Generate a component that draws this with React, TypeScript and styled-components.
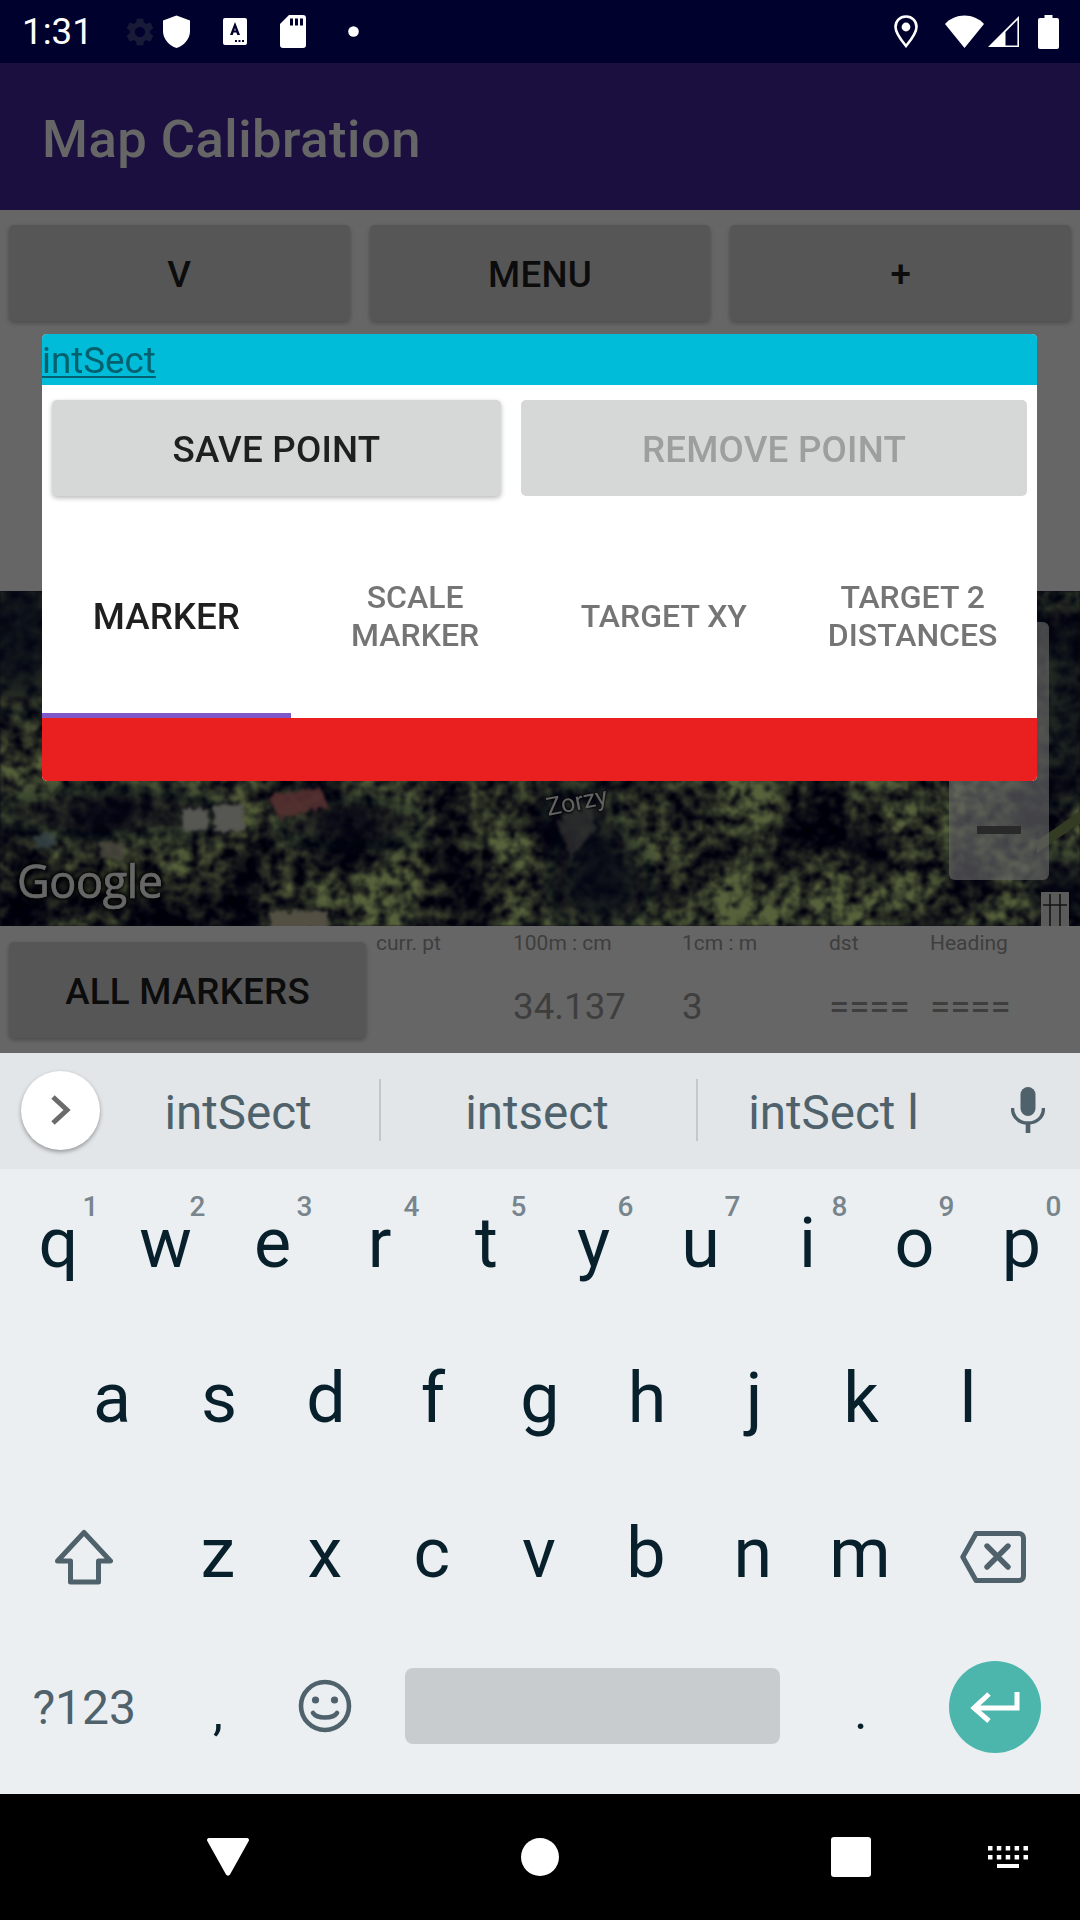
import React from "react";
import styled, { createGlobalStyle } from "styled-components";

const Global = createGlobalStyle`
  html, body { margin: 0; padding: 0; background: #000; }
  * { box-sizing: border-box; }
  body { font-family: Roboto, "Liberation Sans", sans-serif; }
`;

const Page = styled.div`
  width: 1080px;
  height: 1920px;
  display: flex;
  flex-direction: column;
  overflow: hidden;
`;

const StatusBar = styled.div`
  height: 63px;
  flex: none;
  background: #01012e;
  display: flex;
  align-items: center;
  padding: 0 21px 0 22px;
  color: #fff;
`;
const Clock = styled.span`
  font-size: 36.75px;
  width: 67px;
  line-height: 63px;
`;
const StatusIcon = styled.svg<{ $ml: number }>`
  flex: none;
  display: block;
  margin-left: ${(p) => p.$ml}px;
`;
const StatusSpacer = styled.div`
  flex: 1;
`;

const Main = styled.div`
  position: relative;
  height: 990px;
  flex: none;
  background: #fff;
  display: flex;
  flex-direction: column;
`;
const AppBar = styled.header`
  height: 147px;
  flex: none;
  background: #4527a0;
  color: #fff;
  display: flex;
  align-items: center;
  padding: 5px 0 0 42px;
  font-size: 52.5px;
  font-weight: 500;
  letter-spacing: 0.5px;
`;
const Toolbar = styled.div`
  height: 381px;
  flex: none;
  padding: 15px 9px 0 9px;
  display: flex;
  gap: 20px;
  align-items: flex-start;
`;
const RaisedButton = styled.div<{ $muted?: boolean; $flat?: boolean }>`
  height: 96px;
  padding-top: 2px;
  border-radius: 5px;
  background: #d6d7d7;
  color: ${(p) => (p.$muted ? "#9e9e9e" : "#1f1f1f")};
  display: flex;
  align-items: center;
  justify-content: center;
  font-size: 36.75px;
  font-weight: 500;
  letter-spacing: 0.2px;
  box-shadow: ${(p) => (p.$flat ? "none" : "0 2px 5px rgba(0,0,0,.28)")};
`;
const ToolButton = styled(RaisedButton)`
  flex: 1;
`;

const MapArea = styled.div`
  position: relative;
  height: 335px;
  flex: none;
  overflow: hidden;
  background: #16203c;
`;
const MapImage = styled.svg`
  display: block;
  width: 1080px;
  height: 335px;
`;
const GoogleMark = styled.span`
  position: absolute;
  left: 17px;
  top: 260px;
  font-family: "Open Sans", Roboto, sans-serif;
  font-size: 45px;
  font-weight: 400;
  letter-spacing: -0.4px;
  line-height: 60px;
  color: #fff;
  -webkit-text-stroke: 0.7px #fff;
  text-shadow: 0 0 3px #000, 0 0 4px #000, 0 0 5px #000, 0 0 6px #000;
`;
const PlaceName = styled.span`
  position: absolute;
  left: 546px;
  top: 196px;
  font-size: 25px;
  line-height: 30px;
  color: #f2f2f2;
  transform: rotate(-11deg);
  text-shadow: 0 0 2px #000, 0 0 3px #000;
`;
const ZoomControl = styled.div`
  position: absolute;
  left: 949px;
  top: 31px;
  width: 100px;
  height: 258px;
  border-radius: 6px;
  background: rgba(255, 255, 255, 0.66);
  display: flex;
  align-items: flex-end;
  justify-content: center;
  padding-bottom: 46px;
`;
const ZoomMinus = styled.div`
  width: 44px;
  height: 8px;
  background: #666;
`;

const BottomRow = styled.div`
  height: 127px;
  flex: none;
  padding: 16px 0 0 9px;
  display: flex;
  align-items: flex-start;
`;
const AllMarkers = styled(RaisedButton)`
  width: 357px;
  flex: none;
`;
const Stats = styled.div`
  margin-left: 10px;
  flex: 1;
  display: grid;
  grid-template-columns: 137px 169px 147px 101px 1fr;
  grid-template-rows: 30px 56px;
  row-gap: 21px;
  margin-top: -16px;
  padding-top: 2px;
  color: #9c9c9c;
`;
const StatLabel = styled.div`
  font-size: 21px;
  line-height: 30px;
`;
const StatValue = styled.div`
  font-size: 36.75px;
  line-height: 56px;
`;

const Scrim = styled.div`
  position: absolute;
  inset: 0;
  background: rgba(0, 0, 0, 0.6);
`;

const Dialog = styled.div`
  position: absolute;
  left: 42px;
  top: 271px;
  width: 995px;
  height: 447px;
  border-radius: 5px;
  background: #fff;
  overflow: hidden;
  display: flex;
  flex-direction: column;
`;
const DialogTitle = styled.div`
  height: 51px;
  flex: none;
  background: #00bcd8;
  font-size: 36.75px;
  line-height: 54px;
  color: #03606f;
  text-decoration: underline;
  text-underline-offset: 3px;
  text-decoration-thickness: 2px;
`;
const DialogActions = styled.div`
  flex: none;
  padding: 15px 10px 0 10px;
  display: flex;
  gap: 20px;
`;
const SaveButton = styled(RaisedButton)`
  width: 449px;
  flex: none;
`;
const RemoveButton = styled(RaisedButton)`
  flex: 1;
`;
const Tabs = styled.div`
  margin-top: 22px;
  height: 200px;
  flex: none;
  display: grid;
  grid-template-columns: repeat(4, 1fr);
`;
const Tab = styled.div<{ $active?: boolean }>`
  display: flex;
  align-items: center;
  justify-content: center;
  text-align: center;
  font-weight: 500;
  line-height: 38px;
  padding-top: ${(p) => (p.$active ? 2 : 0)}px;
  font-size: ${(p) => (p.$active ? 36.75 : 32)}px;
  color: ${(p) => (p.$active ? "#1f1f1f" : "#757575")};
  border-bottom: 5px solid ${(p) => (p.$active ? "#7e57c8" : "transparent")};
`;
const RedBand = styled.div`
  flex: 1;
  background: #ea2020;
`;

const Keyboard = styled.div`
  height: 741px;
  flex: none;
  background: #eceff2;
  display: flex;
  flex-direction: column;
`;
const Suggestions = styled.div`
  height: 116px;
  flex: none;
  background: #e2e6e9;
  display: flex;
  align-items: center;
  padding-left: 21px;
  padding-bottom: 2px;
`;
const ExpandButton = styled.div`
  width: 79px;
  height: 79px;
  flex: none;
  border-radius: 50%;
  background: #fff;
  box-shadow: 0 2px 4px rgba(0, 0, 0, 0.35);
  display: flex;
  align-items: center;
  justify-content: center;
`;
const Suggestion = styled.div<{ $w: number }>`
  width: ${(p) => p.$w}px;
  flex: none;
  text-align: center;
  font-size: 47.5px;
  line-height: 62px;
  padding: 5px 3px 0 0;
  color: #4f626c;
`;
const SuggestDivider = styled.div`
  width: 2px;
  height: 62px;
  flex: none;
  background: #c3c8cb;
`;
const MicIcon = styled.svg`
  flex: none;
  display: block;
  margin-left: 39px;
`;
const KeyRow = styled.div<{ $center?: boolean }>`
  height: 155px;
  flex: none;
  display: flex;
  padding: 0 4px;
  justify-content: ${(p) => (p.$center ? "center" : "flex-start")};
`;
const Key = styled.div<{ $small?: boolean; $lift?: number }>`
  position: relative;
  width: 107px;
  flex: none;
  display: flex;
  align-items: center;
  justify-content: center;
  font-size: ${(p) => (p.$small ? 50 : 70)}px;
  line-height: 84px;
  color: #07202b;
  padding-bottom: ${(p) => p.$lift ?? (p.$small ? 0 : 8)}px;
`;
const Digit = styled.span`
  position: absolute;
  left: 74.5px;
  top: 21px;
  width: 22px;
  text-align: center;
  font-size: 28px;
  font-weight: 500;
  line-height: 34px;
  color: #78858c;
`;
const WideKey = styled.div<{ $lift?: number }>`
  width: 160.4px;
  flex: none;
  display: flex;
  align-items: center;
  justify-content: center;
  color: #4f626c;
  font-size: 48px;
  padding-bottom: ${(p) => p.$lift ?? 0}px;
`;
const BackspaceIcon = styled.svg`
  display: block;
  margin-right: 1px;
`;
const SpaceCell = styled.div`
  width: 429px;
  flex: none;
  padding: 0 27px;
  display: flex;
  align-items: center;
`;
const SpaceBar = styled.div`
  width: 100%;
  height: 76px;
  border-radius: 8px;
  background: #c8cccf;
  margin-top: -12px;
`;
const EnterButton = styled.div`
  width: 92px;
  height: 92px;
  border-radius: 50%;
  background: #4db6ac;
  display: flex;
  align-items: center;
  justify-content: center;
  margin-top: -9px;
`;

const NavBar = styled.div`
  height: 126px;
  flex: none;
  background: #000;
  position: relative;
  display: flex;
  align-items: center;
  padding-bottom: 1px;
`;
const NavSvg = styled.svg<{ $ml: number }>`
  flex: none;
  display: block;
  margin-left: ${(p) => p.$ml}px;
`;

const Foliage = () => (
  <MapImage viewBox="0 0 1080 335" preserveAspectRatio="none">
    <defs>
      <filter id="foliage" x="0" y="0" width="100%" height="100%" colorInterpolationFilters="sRGB">
        <feTurbulence type="fractalNoise" baseFrequency="0.085" numOctaves="4" seed="11" result="hiRaw" />
        <feColorMatrix in="hiRaw" type="matrix" values="1 0 0 0 0  1 0 0 0 0  1 0 0 0 0  0 0 0 0 1" result="hi" />
        <feTurbulence type="fractalNoise" baseFrequency="0.014" numOctaves="2" seed="23" result="loRaw" />
        <feColorMatrix in="loRaw" type="matrix" values="1 0 0 0 0  1 0 0 0 0  1 0 0 0 0  0 0 0 0 1" result="lo" />
        <feComposite in="hi" in2="lo" operator="arithmetic" k1="2.2" k2="0" k3="0" k4="0" result="mix" />
        <feColorMatrix
          in="mix"
          type="matrix"
          values="1.15 0 0 0 -0.3  1.3 0 0 0 -0.34  0.6 0 0 0 -0.02  0 0 0 0 1"
        />
        <feGaussianBlur stdDeviation="0.8" />
      </filter>
      <filter id="soft" x="-30%" y="-30%" width="160%" height="160%">
        <feGaussianBlur stdDeviation="16" />
      </filter>
      <filter id="rough" x="-20%" y="-20%" width="140%" height="140%">
        <feTurbulence type="fractalNoise" baseFrequency="0.14" numOctaves="2" seed="4" result="n" />
        <feDisplacementMap in="SourceGraphic" in2="n" scale="10" />
        <feGaussianBlur stdDeviation="1.4" />
      </filter>
    </defs>
    <rect width="1080" height="335" filter="url(#foliage)" />
    <g fill="#0e1734" opacity="0.8" filter="url(#soft)">
      <ellipse cx="20" cy="50" rx="50" ry="70" />
      <ellipse cx="110" cy="222" rx="120" ry="18" />
      <ellipse cx="350" cy="232" rx="80" ry="18" />
      <ellipse cx="600" cy="290" rx="46" ry="50" />
      <ellipse cx="580" cy="222" rx="36" ry="22" />
      <ellipse cx="1062" cy="110" rx="26" ry="110" />
      <ellipse cx="1062" cy="290" rx="30" ry="24" />
    </g>
    <g filter="url(#rough)">
      <path d="M268 206 L320 196 L328 216 L280 228 Z" fill="#e07c7c" opacity="0.85" />
      <rect x="183" y="218" width="26" height="22" fill="#d8d8cc" />
      <rect x="214" y="214" width="30" height="26" fill="#d8d8cc" />
      <rect x="35" y="243" width="20" height="13" fill="#8fb0bb" opacity="0.8" />
      <rect x="100" y="252" width="24" height="16" fill="#bdb39e" opacity="0.8" />
      <rect x="270" y="320" width="58" height="18" fill="#cfc6a8" />
      <path d="M558 230 L590 212 L596 236 L570 270 Z" fill="#a0a094" opacity="0.55" />
    </g>
    <rect x="1041" y="301" width="28" height="34" fill="#e4e4e4" />
    <path d="M1050 303 V335 M1060 303 V335 M1043 314 H1067" stroke="#333" strokeWidth="1.6" />
    <path d="M1037 262 L1080 232 L1080 220 L1037 250 Z" fill="#7f9558" />
  </MapImage>
);

const rowOne: [string, string][] = [
  ["q", "1"], ["w", "2"], ["e", "3"], ["r", "4"], ["t", "5"],
  ["y", "6"], ["u", "7"], ["i", "8"], ["o", "9"], ["p", "0"],
];

export default function App() {
  return (
    <Page>
      <Global />
      <StatusBar>
        <Clock>1:31</Clock>
        <StatusIcon $ml={34} width="34" height="34" viewBox="0 0 24 24" fill="#191938">
          <path d="M19.14 12.94c.04-.3.06-.61.06-.94 0-.32-.02-.64-.07-.94l2.03-1.58c.18-.14.23-.41.12-.61l-1.92-3.32c-.12-.22-.37-.29-.59-.22l-2.39.96c-.5-.38-1.03-.7-1.62-.94l-.36-2.54c-.04-.24-.24-.41-.48-.41h-3.84c-.24 0-.43.17-.47.41l-.36 2.54c-.59.24-1.13.57-1.62.94l-2.39-.96c-.22-.08-.47 0-.59.22L2.74 8.87c-.12.21-.08.47.12.61l2.03 1.58c-.05.3-.09.63-.09.94s.02.64.07.94l-2.03 1.58c-.18.14-.23.41-.12.61l1.92 3.32c.12.22.37.29.59.22l2.39-.96c.5.38 1.03.7 1.62.94l.36 2.54c.05.24.24.41.48.41h3.84c.24 0 .44-.17.47-.41l.36-2.54c.59-.24 1.13-.56 1.62-.94l2.39.96c.22.08.47 0 .59-.22l1.92-3.32c.12-.22.07-.47-.12-.61l-2.01-1.58zM12 15.6c-1.98 0-3.6-1.62-3.6-3.6s1.62-3.6 3.6-3.6 3.6 1.62 3.6 3.6-1.62 3.6-3.6 3.6z" />
        </StatusIcon>
        <StatusIcon $ml={6} width="27" height="33" viewBox="0 0 27 33" fill="#fff">
          <path d="M13.5 0.5 L27 5.5 V16 C27 24 21 30.5 13.5 33 C6 30.5 0 24 0 16 V5.5 Z" />
        </StatusIcon>
        <StatusIcon $ml={33} width="24" height="27" viewBox="0 0 24 27">
          <rect width="24" height="27" rx="2" fill="#fff" />
          <path d="M12 4 L17 17 H14.3 L13.4 14.5 H10.6 L9.7 17 H7 Z M11.3 12.4 H12.7 L12 10 Z" fill="#01012e" />
          <rect x="12" y="22" width="2" height="2" fill="#01012e" />
          <rect x="15.5" y="22" width="2" height="2" fill="#01012e" />
          <rect x="19" y="22" width="2" height="2" fill="#01012e" />
        </StatusIcon>
        <StatusIcon $ml={33} width="26" height="33" viewBox="0 0 26 33">
          <path d="M9 0 H23 a3 3 0 0 1 3 3 V30 a3 3 0 0 1 -3 3 H3 a3 3 0 0 1 -3 -3 V9 Z" fill="#fff" />
          <rect x="10" y="3.5" width="3" height="7" fill="#01012e" />
          <rect x="15" y="3.5" width="3" height="7" fill="#01012e" />
          <rect x="20" y="3.5" width="3" height="7" fill="#01012e" />
        </StatusIcon>
        <StatusIcon $ml={42} width="11" height="11" viewBox="0 0 11 11">
          <circle cx="5.5" cy="5.5" r="5.3" fill="#fff" />
        </StatusIcon>
        <StatusSpacer />
        <StatusIcon width="24" height="33" viewBox="0 0 24 33" $ml={0}>
          <path d="M12 1.5 C5.6 1.5 1.5 6.2 1.5 12 C1.5 18.5 8 26 12 31 C16 26 22.5 18.5 22.5 12 C22.5 6.2 18.4 1.5 12 1.5 Z" fill="none" stroke="#fff" strokeWidth="2.6" />
          <circle cx="12" cy="12" r="4.4" fill="#fff" />
        </StatusIcon>
        <StatusIcon $ml={27} width="39" height="33" viewBox="0 0 39 33" fill="#fff">
          <path d="M19.5 33 L0 9 C5 3.5 12 0.5 19.5 0.5 C27 0.5 34 3.5 39 9 Z" />
        </StatusIcon>
        <StatusIcon $ml={3} width="33" height="33" viewBox="0 0 33 33">
          <path d="M32 1 V32 H1 Z" fill="#fff" />
          <path d="M18.5 17 L30.4 5 V30.4 H18.5 Z" fill="#01012e" />
        </StatusIcon>
        <StatusIcon $ml={18} width="21" height="34" viewBox="0 0 21 34" fill="#fff">
          <path d="M6.5 0 H14.5 V3 H19 a2 2 0 0 1 2 2 V32 a2 2 0 0 1 -2 2 H2 a2 2 0 0 1 -2 -2 V5 a2 2 0 0 1 2 -2 H6.5 Z" />
        </StatusIcon>
      </StatusBar>

      <Main>
        <AppBar>Map Calibration</AppBar>
        <Toolbar>
          <ToolButton>V</ToolButton>
          <ToolButton>MENU</ToolButton>
          <ToolButton>+</ToolButton>
        </Toolbar>
        <MapArea>
          <Foliage />
          <GoogleMark>Google</GoogleMark>
          <PlaceName>Zorzy</PlaceName>
          <ZoomControl>
            <ZoomMinus />
          </ZoomControl>
        </MapArea>
        <BottomRow>
          <AllMarkers>ALL MARKERS</AllMarkers>
          <Stats>
            <StatLabel>curr. pt</StatLabel>
            <StatLabel>100m : cm</StatLabel>
            <StatLabel>1cm : m</StatLabel>
            <StatLabel>dst</StatLabel>
            <StatLabel>Heading</StatLabel>
            <StatValue />
            <StatValue>34.137</StatValue>
            <StatValue>3</StatValue>
            <StatValue>====</StatValue>
            <StatValue>====</StatValue>
          </Stats>
        </BottomRow>
        <Scrim />
        <Dialog>
          <DialogTitle>intSect</DialogTitle>
          <DialogActions>
            <SaveButton>SAVE POINT</SaveButton>
            <RemoveButton $muted $flat>REMOVE POINT</RemoveButton>
          </DialogActions>
          <Tabs>
            <Tab $active>MARKER</Tab>
            <Tab>SCALE<br />MARKER</Tab>
            <Tab>TARGET XY</Tab>
            <Tab>TARGET 2<br />DISTANCES</Tab>
          </Tabs>
          <RedBand />
        </Dialog>
      </Main>

      <Keyboard>
        <Suggestions>
          <ExpandButton>
            <svg width="24" height="32" viewBox="0 0 24 32" fill="none" stroke="#6b6b6b" strokeWidth="5">
              <path d="M4 3 L18 16 L4 29" />
            </svg>
          </ExpandButton>
          <Suggestion $w={279}>intSect</Suggestion>
          <SuggestDivider />
          <Suggestion $w={315}>intsect</Suggestion>
          <SuggestDivider />
          <Suggestion $w={274}>intSect l</Suggestion>
          <MicIcon width="34" height="46" viewBox="0 0 34 46" fill="#4f626c">
            <rect x="9.5" y="0" width="15" height="29" rx="7.5" />
            <path d="M1.5 21 C1.5 30 8 36 17 36 C26 36 32.5 30 32.5 21" fill="none" stroke="#4f626c" strokeWidth="3.4" />
            <rect x="14.7" y="35" width="4.6" height="11" />
          </MicIcon>
        </Suggestions>
        <KeyRow $center>
          {rowOne.map(([k, d]) => (
            <Key key={k}>
              {k}
              <Digit>{d}</Digit>
            </Key>
          ))}
        </KeyRow>
        <KeyRow $center>
          {"asdfghjkl".split("").map((k) => (
            <Key key={k}>{k}</Key>
          ))}
        </KeyRow>
        <KeyRow>
          <WideKey>
            <svg width="58" height="56" viewBox="0 0 58 56" fill="none" stroke="#4f626c" strokeWidth="5" strokeLinejoin="round">
              <path d="M29 3.5 L55.5 32 H43.5 V53 H15.5 V32 H2.5 Z" />
            </svg>
          </WideKey>
          {"zxcvbnm".split("").map((k) => (
            <Key key={k}>{k}</Key>
          ))}
          <WideKey>
            <BackspaceIcon width="66" height="52" viewBox="0 0 66 52" fill="none" stroke="#4f626c" strokeWidth="5" strokeLinejoin="round">
              <path d="M2.8 26 L16 2.5 H59 a4.5 4.5 0 0 1 4.5 4.5 V45 a4.5 4.5 0 0 1 -4.5 4.5 H16 Z" />
              <path d="M27 15 L48 36 M48 15 L27 36" strokeLinecap="round" strokeWidth="5.4" />
            </BackspaceIcon>
          </WideKey>
        </KeyRow>
        <KeyRow>
          <WideKey $lift={8}>?123</WideKey>
          <Key $small>,</Key>
          <Key $lift={11}>
            <svg width="54" height="54" viewBox="0 0 54 54" fill="none" stroke="#4f626c" strokeWidth="4.6">
              <circle cx="27" cy="27" r="24" />
              <circle cx="17.5" cy="21" r="3.6" fill="#4f626c" stroke="none" />
              <circle cx="36.5" cy="21" r="3.6" fill="#4f626c" stroke="none" />
              <path d="M15 34 C19 40 35 40 39 34" strokeLinecap="round" />
            </svg>
          </Key>
          <SpaceCell>
            <SpaceBar />
          </SpaceCell>
          <Key $small>.</Key>
          <WideKey>
            <EnterButton>
              <svg width="52" height="32" viewBox="0 0 52 32" fill="none" stroke="#fff" strokeWidth="5">
                <path d="M48 1 V17 H5" />
                <path d="M20 3 L5 17 L20 30" />
              </svg>
            </EnterButton>
          </WideKey>
        </KeyRow>
      </Keyboard>

      <NavBar>
        <NavSvg $ml={207} width="42" height="38" viewBox="0 0 42 38" fill="#fff">
          <path d="M2 0 H40 a2 2 0 0 1 1.7 3 L23 36.5 a2.3 2.3 0 0 1 -4 0 L0.3 3 A2 2 0 0 1 2 0 Z" />
        </NavSvg>
        <NavSvg $ml={272} width="38" height="38" viewBox="0 0 38 38" fill="#fff">
          <circle cx="19" cy="19" r="19" />
        </NavSvg>
        <NavSvg $ml={272} width="40" height="40" viewBox="0 0 40 40" fill="#fff">
          <rect width="40" height="40" rx="3" />
        </NavSvg>
        <NavSvg $ml={117} width="40" height="22" viewBox="0 0 40 22" fill="#fff">
          <rect x="0" y="0" width="4.5" height="4.5" />
          <rect x="8.8" y="0" width="4.5" height="4.5" />
          <rect x="17.7" y="0" width="4.5" height="4.5" />
          <rect x="26.6" y="0" width="4.5" height="4.5" />
          <rect x="35.5" y="0" width="4.5" height="4.5" />
          <rect x="0" y="9" width="4.5" height="4.5" />
          <rect x="8.8" y="9" width="4.5" height="4.5" />
          <rect x="17.7" y="9" width="4.5" height="4.5" />
          <rect x="26.6" y="9" width="4.5" height="4.5" />
          <rect x="35.5" y="9" width="4.5" height="4.5" />
          <rect x="9" y="18" width="22" height="4" />
        </NavSvg>
      </NavBar>
    </Page>
  );
}
